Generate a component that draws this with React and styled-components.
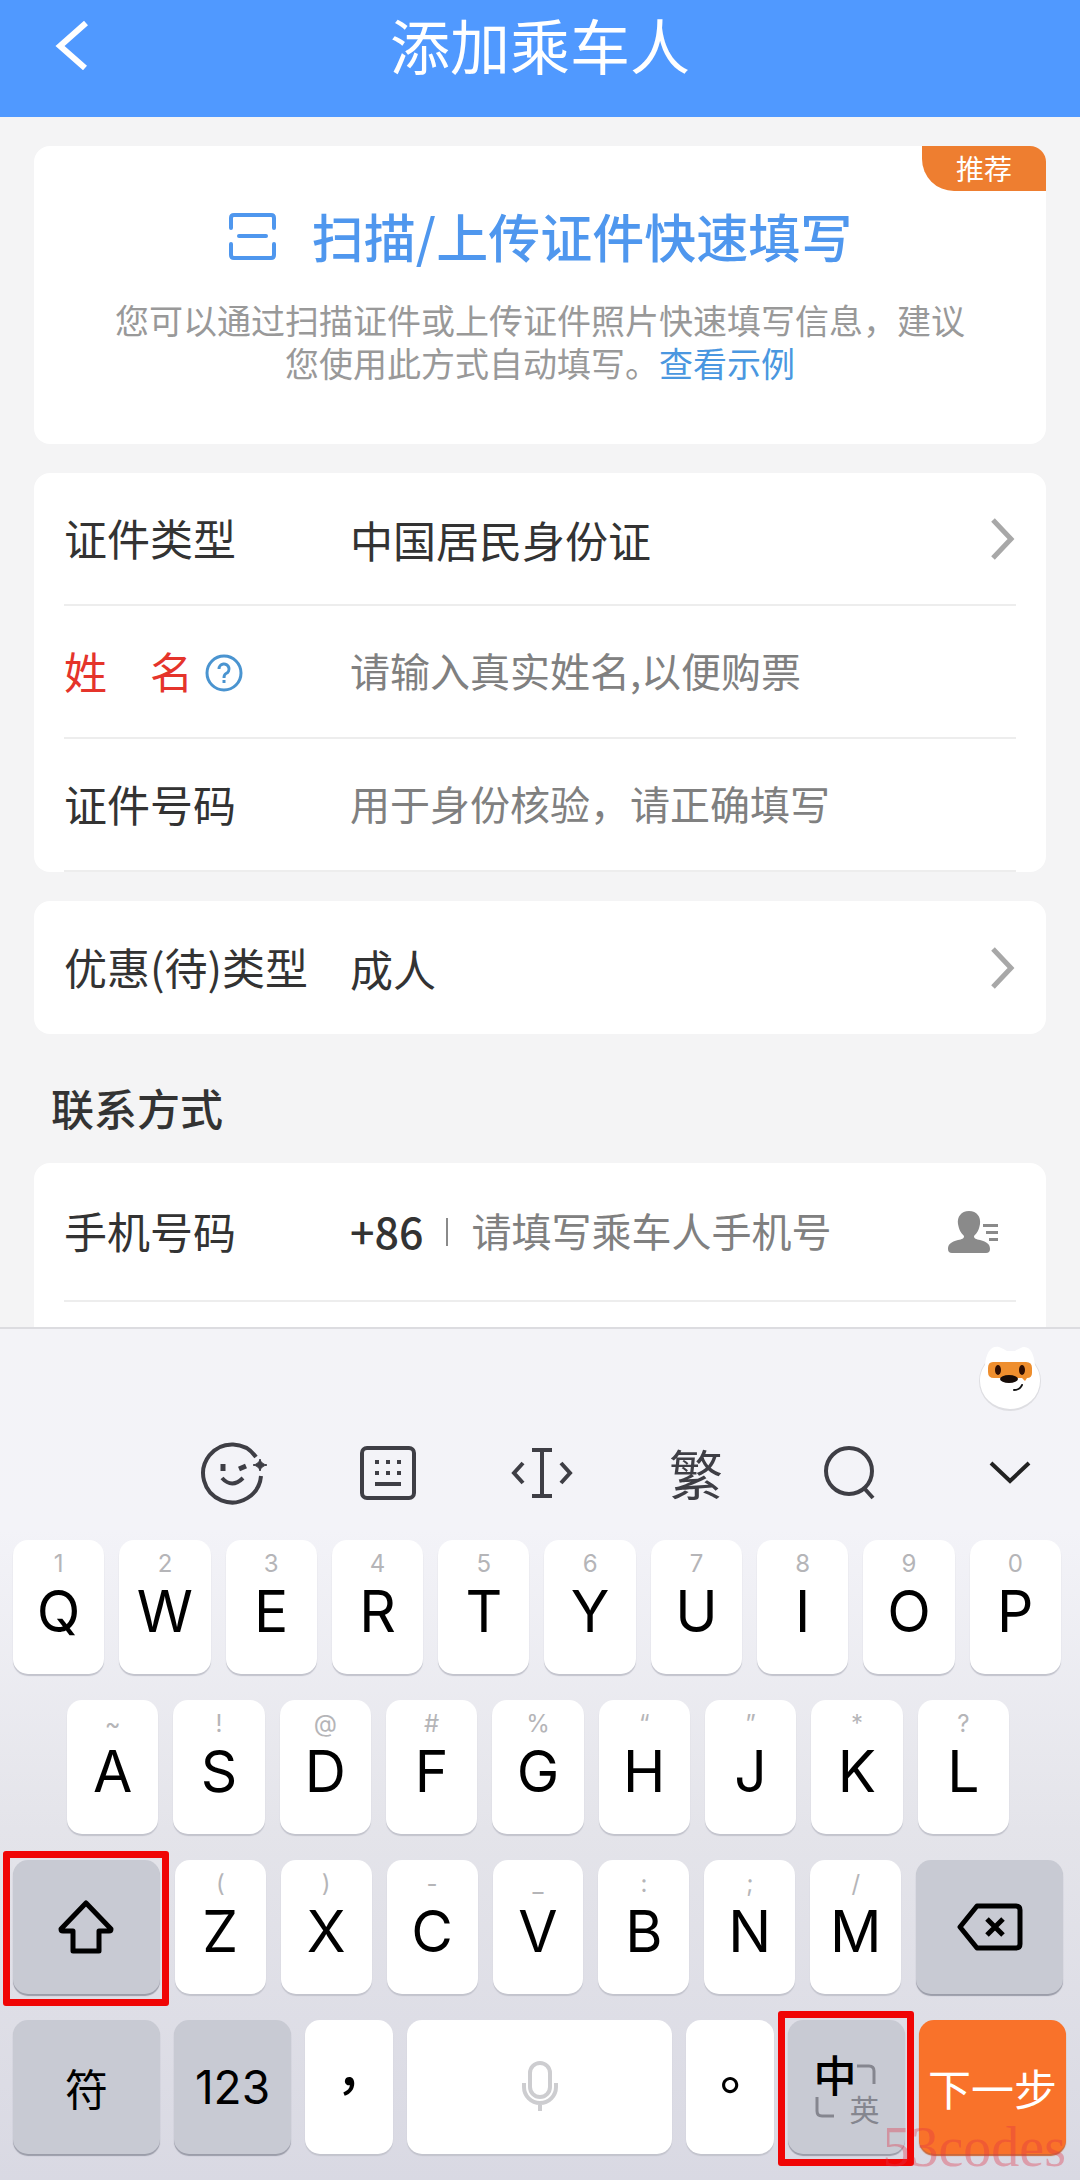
import React from "react";
import styled, { createGlobalStyle } from "styled-components";

const GlobalStyle = createGlobalStyle`
  * {
    box-sizing: border-box;
  }
  body {
    margin: 0;
    background: #f4f4f5;
    font-family: "Noto Sans CJK SC", sans-serif;
    color: #333;
  }
  button, input {
    font: inherit;
    color: inherit;
    border: 0;
    padding: 0;
    margin: 0;
    background: none;
  }
  svg {
    display: block;
  }
`;

const Page = styled.div`
  display: flex;
  flex-direction: column;
  min-height: 100vh;
`;

const TopBar = styled.header`
  display: grid;
  grid-template-columns: 100px 1fr 100px;
  align-items: start;
  padding-top: 4px;
  height: 117px;
  background: #5099ff;
  color: #fff;
`;

const BackButton = styled.button`
  display: flex;
  padding: 16px 0 0 52px;
`;

const Title = styled.h1`
  margin: 0;
  font-size: 60px;
  font-weight: 400;
  line-height: 80px;
  text-align: center;
`;

const Form = styled.form`
  padding: 29px 34px 0;
`;

const Card = styled.section`
  background: #fff;
  border-radius: 16px;
  margin-bottom: 29px;
  padding: 0 30px;
`;

const ScanCard = styled(Card)`
  position: relative;
  overflow: hidden;
  padding: 54px 60px 60px;
  text-align: center;
`;

const Badge = styled.span`
  position: absolute;
  top: 0;
  right: 0;
  width: 124px;
  background: #ee7e30;
  border-bottom-left-radius: 32px;
  color: #fff;
  font-size: 28px;
  line-height: 45px;
`;

const ScanButton = styled.button`
  display: inline-flex;
  align-items: center;
  gap: 36px;
  color: #4f97ee;
  font-size: 52px;
  font-weight: 500;
  line-height: 72px;
`;

const ScanHint = styled.p`
  margin: 26px 0 0;
  color: #999;
  font-size: 34px;
  line-height: 43px;

  a {
    color: #4a97e0;
    text-decoration: none;
  }
`;

const Row = styled.div`
  display: grid;
  grid-template-columns: 286px 1fr;
  align-items: center;
  height: ${props => (props.$tall ? "139px" : "133px")};
  border-bottom: ${props => (props.$line ? "2px solid #ededed" : "0")};
  font-size: 43px;
  line-height: 60px;
`;

const Label = styled.label`
  display: flex;
  align-items: center;
  gap: 11px;
  padding-bottom: 4px;
  white-space: pre;
  color: ${props => (props.$warn ? "#e5342b" : "#333")};
`;

const HelpButton = styled.button`
  display: flex;
  padding-top: 6px;
`;

const Picker = styled.button`
  display: flex;
  align-items: center;
  justify-content: space-between;
  text-align: left;
`;

const Field = styled.input`
  width: 100%;
  min-width: 0;
  padding-bottom: 4px;
  font-size: 40px;
  line-height: 60px;
  outline: none;

  &::placeholder {
    color: #808080;
    opacity: 1;
  }
`;

const SectionTitle = styled.h2`
  margin: 0 0 12px 17px;
  font-size: 43px;
  font-weight: 500;
  line-height: 88px;
`;

const ContactCard = styled(Card)`
  margin: 0;
  padding-bottom: 25px;
  border-radius: 16px 16px 0 0;
`;

const Phone = styled.div`
  display: flex;
  align-items: center;
`;

const Code = styled.span`
  font-weight: 500;
  padding: 0 22px 4px 0;
`;

const Bar = styled.span`
  flex: none;
  width: 2px;
  height: 28px;
  margin-right: 24px;
  background: #8a8a8a;
`;

const ContactsButton = styled.button`
  display: flex;
  padding-right: 17px;
`;

const Keyboard = styled.div`
  position: relative;
  flex: 1;
  border-top: 2px solid #dcdce0;
  background: linear-gradient(#f3f3f7 0, #f3f3f8 200px, #e4e4ea 500px, #d9d9e3 100%);
  color: #000;
  padding-bottom: 25px;
`;

const MascotBar = styled.div`
  display: flex;
  justify-content: flex-end;
  padding: 14px 37px 0 0;
`;

const Tools = styled.div`
  display: flex;
  align-items: center;
  gap: 86px;
  height: 80px;
  margin: 20px 36px 27px 200px;
  color: #3e3e45;
`;

const Tool = styled.button`
  display: flex;
  flex: none;
  justify-content: center;
  width: 68px;
  font-size: 54px;
  line-height: 64px;

  &:last-child {
    margin-left: auto;
  }
`;

const KeyRow = styled.div`
  display: flex;
  gap: ${props => props.$gap || 15}px;
  padding: 0 ${props => props.$right}px 0 ${props => props.$left}px;
  margin-bottom: 26px;

  &:last-of-type {
    margin-bottom: 0;
  }
`;

const keyColors = {
  light: "#fff",
  dark: "#c8cad3",
  go: "#f9722a"
};

const keyEdges = {
  light: "#c3c4cd",
  dark: "#9b9da9",
  go: "#c9683a"
};

const Key = styled.button`
  position: relative;
  display: flex;
  flex-direction: column;
  align-items: center;
  justify-content: center;
  flex: ${props => props.$size || 91} 1 0;
  min-width: 0;
  height: 134px;
  border-radius: 15px;
  background: ${props => keyColors[props.$tone || "light"]};
  box-shadow: 0 2px 1px ${props => keyEdges[props.$tone || "light"]};
  color: ${props => (props.$tone === "go" ? "#fff" : "#000")};
  font-size: 43px;
  white-space: nowrap;
`;

const LetterKey = styled(Key)`
  justify-content: flex-start;
  padding-top: 10px;
  font-family: Inter, sans-serif;
`;

const NumberKey = styled(Key)`
  font-family: Inter, sans-serif;
  font-size: 46px;
`;

const MarkKey = styled(Key)`
  padding-bottom: 10px;
  font-family: "Noto Sans CJK TC", sans-serif;
  font-size: 52px;
  font-weight: 500;
`;

const Hint = styled.span`
  color: #b5b5b8;
  font-size: 24px;
  line-height: 28px;
`;

const Letter = styled.span`
  font-size: 57px;
  line-height: 68px;
`;

const Frame = styled.span`
  position: absolute;
  inset: -9px -9px -12px -10px;
  border: 7px solid #f00505;
  border-radius: 3px;
  z-index: 1;
  pointer-events: none;
`;

const Lang = styled.span`
  display: grid;
  grid-template-columns: 40px 26px;
  grid-template-rows: 42px 28px;
  align-items: center;
`;

const LangOn = styled.span`
  font-size: 43px;
  font-weight: 500;
  line-height: 42px;
`;

const LangOff = styled.span`
  justify-self: end;
  color: #85868f;
  font-size: 30px;
  line-height: 28px;
`;

const Watermark = styled.span`
  position: absolute;
  right: 14px;
  bottom: 5px;
  z-index: 2;
  color: rgba(225, 50, 70, 0.36);
  font-family: "Liberation Serif", serif;
  font-size: 56px;
  line-height: 56px;
  pointer-events: none;
`;

const Chevron = () => (
  <svg width="26" height="42" viewBox="0 0 26 42" fill="none" stroke="#a8a8a8" strokeWidth="5">
    <path d="M3 2 L21 21 L3 40" />
  </svg>
);

const BackIcon = () => (
  <svg width="38" height="50" viewBox="0 0 38 50" fill="none" stroke="#fff" strokeWidth="6">
    <path d="M34 3 L8 26 L33 48" />
  </svg>
);

const ScanIcon = () => (
  <svg width="48" height="48" viewBox="0 0 48 48" fill="none" stroke="currentColor" strokeWidth="4" strokeLinecap="round">
    <path d="M3 16 V6 Q3 3 6 3 H43 Q46 3 46 6 V16" />
    <path d="M3 32 V43 Q3 46 6 46 H43 Q46 46 46 43 V32" />
    <path d="M11 24 H38" />
  </svg>
);

const HelpIcon = () => (
  <svg width="40" height="40" viewBox="0 0 40 40" fill="none" stroke="#4a94d0" strokeWidth="3">
    <circle cx="20" cy="20" r="17" />
    <path d="M15 16 a5 5 0 1 1 7 4.500 q-2 1 -2 4.500" />
    <path d="M20 27 v3" />
  </svg>
);

const ContactsIcon = () => (
  <svg width="52" height="44" viewBox="0 0 52 44" fill="#8a8a8a">
    <path d="M22 1 C30 1 34 7 33 14 C32 20 30 23 27 26 C27 29 29 29 33 30 C40 32 43 34 43 39 Q43 43 39 43 H5 Q1 43 1 39 C1 34 4 32 11 30 C15 29 17 29 17 26 C14 23 12 20 11 14 C10 7 14 1 22 1 Z" />
    <path d="M36 14 h15 v3 h-15 z M39 21 h12 v3 h-12 z M42 28 h9 v3 h-9 z" />
  </svg>
);

const Mascot = () => (
  <svg width="66" height="70" viewBox="0 0 66 70" aria-hidden="true">
    <ellipse cx="33" cy="38" rx="31" ry="30" fill="#dedee2" />
    <path d="M8 22 C9 10 14 2 22 4 Q27 6 30 8 H38 Q41 6 46 4 C54 3 57 12 58 22 C62 28 63 32 63 38 A30 28 0 0 1 3 38 C3 31 5 26 8 22 Z" fill="#fff" />
    <path d="M16 19 H49 Q55 19 55 25 V30 Q55 35 50 35 L48 38 L45 35 H17 Q11 35 11 29 V25 Q11 19 16 19 Z" fill="#ee8e2e" />
    <ellipse cx="21" cy="27" rx="3" ry="5" fill="#2d0d02" />
    <ellipse cx="45" cy="27" rx="3" ry="5" fill="#2d0d02" />
    <ellipse cx="32" cy="36" rx="9" ry="4" fill="#150b08" />
    <path d="M37 47 Q43 47 45 42" fill="none" stroke="#111" strokeWidth="2" strokeLinecap="round" />
  </svg>
);

const SmileIcon = () => (
  <svg width="68" height="64" viewBox="0 0 68 64" fill="none" stroke="currentColor" strokeWidth="4">
    <path d="M56 16 A29 29 0 1 0 61 35" />
    <path d="M23 23 v7 M39 28 l7 -3" strokeWidth="5" />
    <path d="M22 37 Q32 48 43 37" />
    <path d="M60 18 q1 5 7 6 q-6 1 -7 6 q-1 -5 -7 -6 q6 -1 7 -6 z" fill="currentColor" strokeWidth="1" />
  </svg>
);

const BoardIcon = () => (
  <svg width="56" height="54" viewBox="0 0 56 54" fill="none" stroke="currentColor" strokeWidth="4">
    <rect x="2" y="2" width="52" height="50" rx="5" />
    <path d="M15 16 h4 M26 16 h4 M37 16 h4 M15 27 h4 M26 27 h4 M37 27 h4 M15 38 h26" />
  </svg>
);

const CursorIcon = () => (
  <svg width="62" height="52" viewBox="0 0 62 52" fill="none" stroke="currentColor" strokeWidth="4">
    <path d="M21 3 H41 M21 49 H41 M31 3 V49" />
    <path d="M12 16 L3 26 L12 36 M50 16 L59 26 L50 36" />
  </svg>
);

const SearchIcon = () => (
  <svg width="54" height="56" viewBox="0 0 54 56" fill="none" stroke="currentColor" strokeWidth="4">
    <circle cx="26" cy="26" r="23" />
    <path d="M41 43 L50 53" />
  </svg>
);

const HideIcon = () => (
  <svg width="44" height="26" viewBox="0 0 44 26" fill="none" stroke="#222" strokeWidth="4">
    <path d="M3 3 L22 21 L41 3" />
  </svg>
);

const ShiftIcon = () => (
  <svg width="56" height="54" viewBox="0 0 56 54" fill="none" stroke="#000" strokeWidth="5" strokeLinejoin="round">
    <path d="M28 3 L53 29 Q53 31 51 31 H41 V51 H15 V31 H5 Q3 31 3 29 Z" />
  </svg>
);

const DeleteIcon = () => (
  <svg width="66" height="48" viewBox="0 0 66 48" fill="none" stroke="#000" strokeWidth="5" strokeLinejoin="round">
    <path d="M20 3 H59 Q63 3 63 7 V41 Q63 45 59 45 H20 L3 24 Z" />
    <path d="M30 16 L46 32 M46 16 L30 32" />
  </svg>
);

const MicIcon = () => (
  <svg width="38" height="52" viewBox="0 0 38 52" fill="none" stroke="#cdcdd0" strokeWidth="4">
    <rect x="9" y="2" width="20" height="34" rx="10" />
    <path d="M3 22 V26 A16 16 0 0 0 35 26 V22 M19 42 V50" />
  </svg>
);

const Corner = ({ d }) => (
  <svg width="22" height="22" viewBox="0 0 22 22" fill="none" stroke="#85868f" strokeWidth="3">
    <path d={d} />
  </svg>
);

const numberRow = ["1Q", "2W", "3E", "4R", "5T", "6Y", "7U", "8I", "9O", "0P"];
const homeRow = ["~A", "!S", "@D", "#F", "%G", "“H", "”J", "*K", "?L"];
const lowerRow = ["(Z", ")X", "-C", "_V", ":B", ";N", "/M"];

const Letters = ({ keys }) =>
  keys.map(key => (
    <LetterKey key={key} type="button">
      <Hint>{key[0]}</Hint>
      <Letter>{key[1]}</Letter>
    </LetterKey>
  ));

const App = () => (
  <Page>
    <GlobalStyle />
    <TopBar>
      <BackButton type="button" aria-label="返回">
        <BackIcon />
      </BackButton>
      <Title>添加乘车人</Title>
    </TopBar>
    <Form>
      <ScanCard>
        <Badge>推荐</Badge>
        <ScanButton type="button">
          <ScanIcon />
          扫描/上传证件快速填写
        </ScanButton>
        <ScanHint>
          您可以通过扫描证件或上传证件照片快速填写信息，建议
          <br />
          您使用此方式自动填写。<a href="#example">查看示例</a>
        </ScanHint>
      </ScanCard>
      <Card>
        <Row $line>
          <Label htmlFor="idType">证件类型</Label>
          <Picker id="idType" type="button">
            中国居民身份证
            <Chevron />
          </Picker>
        </Row>
        <Row $line>
          <Label as="div" $warn>
            <label htmlFor="name">姓　名</label>
            <HelpButton type="button" aria-label="帮助">
              <HelpIcon />
            </HelpButton>
          </Label>
          <Field id="name" placeholder="请输入真实姓名,以便购票" />
        </Row>
        <Row $line>
          <Label htmlFor="idNumber">证件号码</Label>
          <Field id="idNumber" placeholder="用于身份核验，请正确填写" />
        </Row>
      </Card>
      <Card>
        <Row>
          <Label htmlFor="discount">优惠(待)类型</Label>
          <Picker id="discount" type="button">
            成人
            <Chevron />
          </Picker>
        </Row>
      </Card>
      <SectionTitle>联系方式</SectionTitle>
      <ContactCard>
        <Row $line $tall>
          <Label htmlFor="phone">手机号码</Label>
          <Phone>
            <Code>+86</Code>
            <Bar />
            <Field id="phone" type="tel" placeholder="请填写乘车人手机号" />
            <ContactsButton type="button" aria-label="通讯录">
              <ContactsIcon />
            </ContactsButton>
          </Phone>
        </Row>
      </ContactCard>
    </Form>
    <Keyboard>
      <MascotBar>
        <Mascot />
      </MascotBar>
      <Tools>
        <Tool type="button" aria-label="表情"><SmileIcon /></Tool>
        <Tool type="button" aria-label="键盘"><BoardIcon /></Tool>
        <Tool type="button" aria-label="光标"><CursorIcon /></Tool>
        <Tool type="button">繁</Tool>
        <Tool type="button" aria-label="搜索"><SearchIcon /></Tool>
        <Tool type="button" aria-label="收起"><HideIcon /></Tool>
      </Tools>
      <KeyRow $left={13} $right={19}>
        <Letters keys={numberRow} />
      </KeyRow>
      <KeyRow $left={67} $right={71}>
        <Letters keys={homeRow} />
      </KeyRow>
      <KeyRow $left={13} $right={17}>
        <Key type="button" $tone="dark" $size={147} aria-label="Shift">
          <ShiftIcon />
          <Frame />
        </Key>
        <Letters keys={lowerRow} />
        <Key type="button" $tone="dark" $size={147} aria-label="删除">
          <DeleteIcon />
        </Key>
      </KeyRow>
      <KeyRow $left={13} $right={14} $gap={14}>
        <Key type="button" $tone="dark" $size={147}>符</Key>
        <NumberKey type="button" $tone="dark" $size={117}>123</NumberKey>
        <MarkKey type="button" $size={88}>，</MarkKey>
        <Key type="button" $size={265} aria-label="空格">
          <MicIcon />
        </Key>
        <MarkKey type="button" $size={88}>。</MarkKey>
        <Key type="button" $tone="dark" $size={117}>
          <Lang>
            <LangOn>中</LangOn>
            <Corner d="M3 4 H15 Q20 4 20 9 V22" />
            <Corner d="M3 0 V14 Q3 19 8 19 H20" />
            <LangOff>英</LangOff>
          </Lang>
          <Frame />
        </Key>
        <Key type="button" $tone="go" $size={147}>下一步</Key>
      </KeyRow>
      <Watermark>53codes</Watermark>
    </Keyboard>
  </Page>
);

export default App;
